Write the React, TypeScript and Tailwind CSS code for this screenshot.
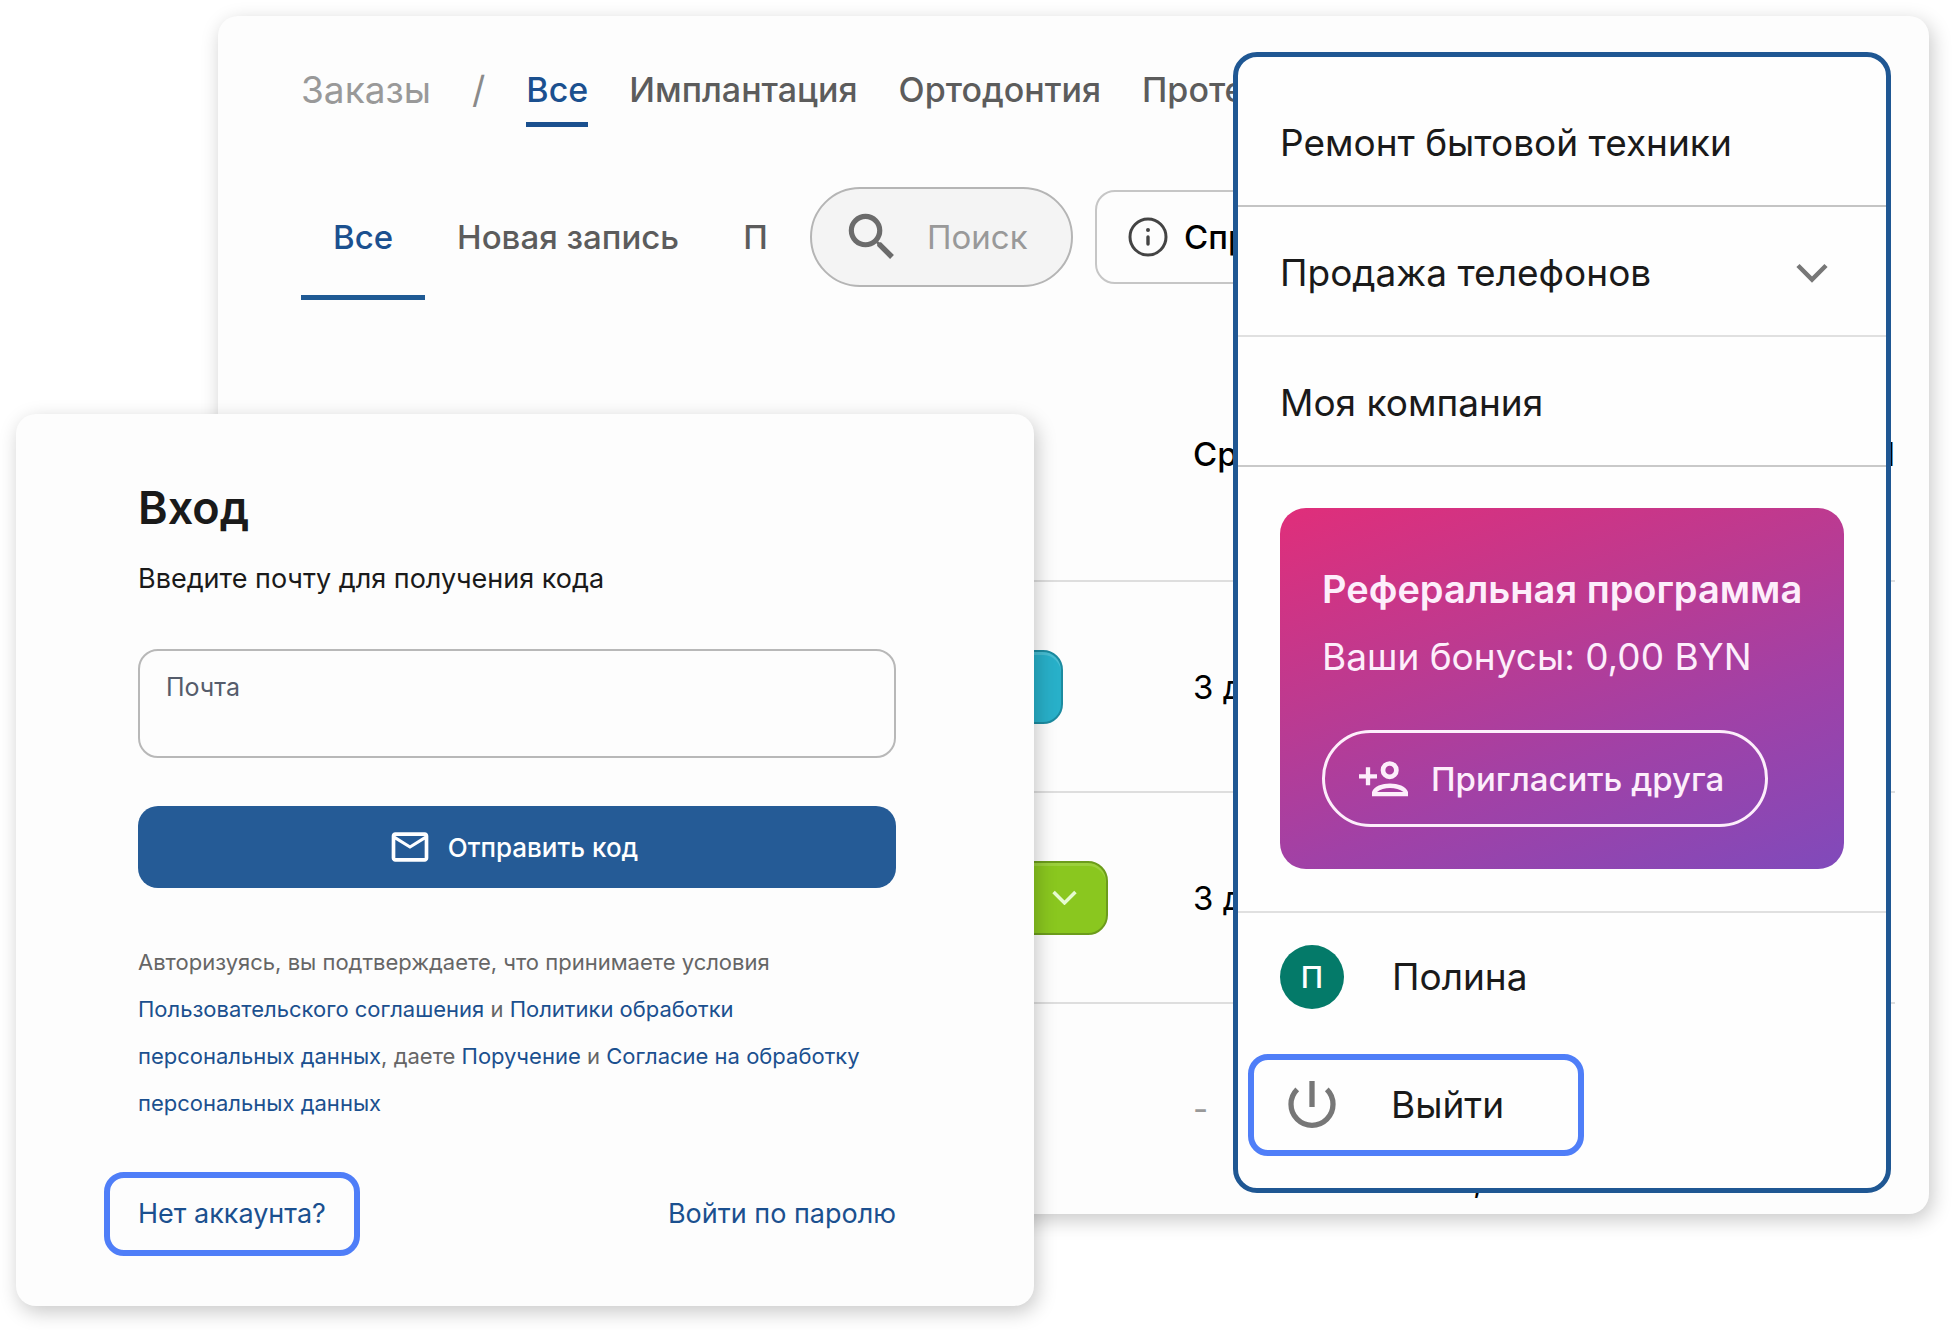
import React, { useState } from 'react';
import { MdMailOutline, MdSearch } from 'react-icons/md';
import { clsx } from 'clsx';

const categories = ['Все', 'Имплантация', 'Ортодонтия', 'Протезирование'];
const filters = ['Все', 'Новая запись', 'П'];

const orders = [
  { id: 1, status: 'teal', term: '3 дня', total: '' },
  { id: 2, status: 'green', term: '3 дня', total: '' },
  { id: 3, status: '', term: '-', total: '0,00' },
];

const Chevron: React.FC<{ className?: string }> = ({ className }) => (
  <svg
    viewBox="0 0 32 20"
    fill="none"
    stroke="currentColor"
    strokeWidth="4.5"
    className={className}
    aria-hidden="true"
  >
    <path d="M2 2.5 16 16.5 30 2.5" />
  </svg>
);

const InfoIcon: React.FC = () => (
  <svg viewBox="0 0 40 40" fill="none" stroke="#444" strokeWidth="3" className="size-10" aria-hidden="true">
    <circle cx="20" cy="20" r="18" />
    <path d="M20 20v7" strokeWidth="3.4" strokeLinecap="round" />
    <circle cx="20" cy="13" r="2" fill="#444" stroke="none" />
  </svg>
);

const InviteIcon: React.FC = () => (
  <svg viewBox="0 0 50 36" fill="none" className="h-9 w-[50px]" aria-hidden="true">
    <path d="M9 6.3v18M0 15.3h18" stroke="currentColor" strokeWidth="4.3" />
    <circle cx="30.7" cy="9.2" r="6.7" stroke="currentColor" strokeWidth="4.7" />
    <path
      fill="currentColor"
      fillRule="evenodd"
      d="M13 35.3V31C15 25.3 23 22.6 31 22.6S47 25.3 49 31V35.3ZM18 31C21 28.3 26 27 31 27S41 28.3 44.5 31Z"
    />
  </svg>
);

const PowerIcon: React.FC = () => (
  <svg viewBox="0 0 48 48" fill="none" stroke="currentColor" strokeWidth="5.3" className="size-12 text-[#777]" aria-hidden="true">
    <path d="M24 0v26M9.2 8.4a21 21 0 1 0 29.6 0" />
  </svg>
);

const StatusPill: React.FC<{ status: string }> = ({ status }) => {
  if (!status) return null;
  const green = status === 'green';
  return (
    <button
      type="button"
      aria-label="Статус заказа"
      className={clsx(
        'flex h-[74px] items-center justify-end rounded-[20px] border-2 px-[29px]',
        green
          ? 'w-[285px] border-[#6c9c1c] bg-[#8ac71f] shadow-[inset_0_3px_0_#9bd03c]'
          : 'w-[240px] border-[#1c8ba0] bg-[#28b0c9] shadow-[inset_0_3px_0_#48bdd2]'
      )}
    >
      {green && <Chevron className="w-[25px] text-[#e6fbd0]" />}
    </button>
  );
};

const OrdersBoard: React.FC = () => {
  const [category, setCategory] = useState('Все');
  const [filter, setFilter] = useState('Все');

  return (
    <section className="overflow-hidden pt-[50px] pr-[34px] pl-[83px] text-[33px] leading-[48px]">
      {/* Breadcrumb with order categories */}
      <nav className="flex items-start gap-[41px] text-[34px] whitespace-nowrap text-[#5c5c5c]">
        <a href="#orders" className="text-[37px] text-[#999]">Заказы</a>
        <span className="text-[37px] text-[#8a8a8a]">/</span>
        {categories.map((item) => (
          <button
            key={item}
            type="button"
            onClick={() => setCategory(item)}
            className={clsx(
              'border-b-[5px] pb-2 font-medium',
              item === category ? 'border-[#1b508f] text-[#1b508f]' : 'border-transparent'
            )}
          >
            {item}
          </button>
        ))}
      </nav>

      {/* Filters, search and help */}
      <div className="mt-[46px] flex items-center whitespace-nowrap">
        <div className="flex w-[498px] shrink-0 overflow-hidden text-[#5c5c5c]">
          {filters.map((item) => (
            <button
              key={item}
              type="button"
              onClick={() => setFilter(item)}
              className={clsx(
                'border-b-[5px] px-[32px] pt-10 pb-[34px] font-medium',
                item === filter ? 'border-[#1f5a94] text-[#1b508f]' : 'border-transparent'
              )}
            >
              {item}
            </button>
          ))}
        </div>
        <label className="ml-[11px] flex h-[100px] w-[263px] shrink-0 items-center gap-6 rounded-full border-2 border-[#b5b5b5] bg-[#f4f4f4] px-[29px]">
          <MdSearch className="size-[62px] shrink-0 text-[#6b6b6b]" />
          <input
            type="text"
            aria-label="Поиск"
            placeholder="Поиск"
            className="w-full min-w-0 outline-none placeholder:text-[#999]"
          />
        </label>
        <button
          type="button"
          className="ml-[22px] flex h-[94px] shrink-0 items-center gap-4 rounded-[20px] border-2 border-[#c6c6c6] px-[31px] font-medium text-black"
        >
          <InfoIcon />
          Справка
        </button>
      </div>

      <table className="mt-7 w-full table-fixed text-left text-black">
        <thead>
          <tr className="h-[253px] border-b-2 border-[#dedede]">
            <th className="w-[522px]" />
            <th className="w-[370px]" />
            <th className="w-[240px] font-medium">Срок</th>
            <th className="text-right font-medium">П</th>
          </tr>
        </thead>
        <tbody>
          {orders.map((order) => (
            <tr key={order.id} className="h-[211px] border-b-2 border-[#dedede] last:border-b-0">
              <td />
              <td><StatusPill status={order.status} /></td>
              <td className={order.term === '-' ? 'text-[#999]' : ''}>{order.term}</td>
              <td className="pb-[10px] pl-5 align-bottom">{order.total}</td>
            </tr>
          ))}
        </tbody>
      </table>
    </section>
  );
};

const AccountMenu: React.FC = () => (
  <aside className="absolute top-9 right-[38px] w-[658px] overflow-hidden rounded-[24px] border-[5px] border-[#1f5793] bg-[#fefefe] pt-5 pb-8 text-[37px] leading-[48px] text-[#1a1a1a]">
    <a href="#repair" className="flex h-[130px] items-center border-b-2 border-[#c4c4c4] px-[42px] pt-1">
      Ремонт бытовой техники
    </a>
    <button
      type="button"
      className="flex h-[130px] w-full items-center justify-between border-b-2 border-[#e0e0e0] pt-1 pr-[58px] pl-[42px]"
    >
      Продажа телефонов
      <Chevron className="w-8 text-[#777]" />
    </button>
    <a href="#company" className="flex h-[130px] items-center border-b-2 border-[#c9c9c9] px-[42px] pt-1">
      Моя компания
    </a>

    <div className="border-b-2 border-[#e0e0e0] px-[42px] pt-[41px] pb-[42px]">
      <div className="rounded-[26px] bg-[linear-gradient(160deg,#e02e7a_0%,#bd3a90_36%,#a141a6_64%,#804abb_100%)] px-[42px] pt-[47px] pb-[42px] whitespace-nowrap text-[#fdeefb]">
        <h2 className="text-[38px] leading-[68px] font-semibold">Реферальная программа</h2>
        <p className="leading-[68px]">Ваши бонусы: 0,00 BYN</p>
        <button
          type="button"
          className="mt-[39px] flex h-[97px] w-[446px] items-center gap-[22px] rounded-full border-[3px] border-[#fdeefb] pl-[34px] text-[33px] font-medium"
        >
          <InviteIcon />
          Пригласить друга
        </button>
      </div>
    </div>

    <a href="#profile" className="flex items-center gap-12 px-[42px] pt-8">
      <span className="grid size-[64px] place-items-center rounded-full bg-[#047a69] text-[30px] font-medium text-white">П</span>
      Полина
    </a>
    <button
      type="button"
      className="mt-[45px] ml-[10px] flex h-[102px] w-[336px] items-center gap-[55px] rounded-[20px] border-[6px] border-[#4f7ef8] pl-[34px]"
    >
      <PowerIcon />
      Выйти
    </button>
  </aside>
);

const LoginCard: React.FC = () => {
  const [email, setEmail] = useState('');

  return (
    <form
      onSubmit={(e) => e.preventDefault()}
      className="absolute top-[414px] left-4 w-[1018px] rounded-[20px] bg-[#fdfdfd] pt-16 pr-[138px] pb-[50px] pl-[122px] text-[27px] text-[#1a1a1a] shadow-[3px_6px_20px_rgba(0,0,0,0.22)]"
    >
      <h1 className="text-[45px] leading-[60px] font-semibold">Вход</h1>
      <p className="mt-[21px] leading-[40px]">Введите почту для получения кода</p>

      <div className="mt-[50px] flex h-[109px] flex-col rounded-[20px] border-2 border-[#b8b8b8] px-[26px] pt-4">
        <label htmlFor="email" className="text-[25px] leading-[40px] text-[#555c6b]">Почта</label>
        <input
          id="email"
          type="email"
          value={email}
          onChange={(e) => setEmail(e.target.value)}
          className="leading-[40px] outline-none"
        />
      </div>

      <button
        type="submit"
        className="mt-12 flex h-[82px] w-full items-center justify-center gap-4 rounded-[20px] bg-[#255b96] pr-2 text-[26px] font-medium text-white"
      >
        <MdMailOutline className="size-[44px]" />
        Отправить код
      </button>

      <p className="mt-[51px] text-[22px] leading-[47px] text-[#666] [&_a]:text-[#1b508f]">
        Авторизуясь, вы подтверждаете, что принимаете условия{' '}
        <a href="#terms">Пользовательского соглашения</a> и{' '}
        <a href="#policy">Политики обработки персональных данных</a>, даете{' '}
        <a href="#order">Поручение</a> и{' '}
        <a href="#consent">Согласие на обработку персональных данных</a>
      </p>

      <div className="mt-[45px] flex items-center justify-between text-[#1b508f]">
        <a
          href="#signup"
          className="-ml-[34px] flex h-[84px] items-center rounded-[20px] border-[6px] border-[#4f7ef8] px-7"
        >
          Нет аккаунта?
        </a>
        <a href="#password">Войти по паролю</a>
      </div>
    </form>
  );
};

const App: React.FC = () => (
  <main className="relative min-h-screen bg-white pt-4 pr-[23px] pb-[116px] pl-[218px] font-['Inter',sans-serif]">
    <div className="relative rounded-[20px] bg-[#fdfdfd] shadow-[3px_6px_20px_rgba(0,0,0,0.22)]">
      <OrdersBoard />
      <AccountMenu />
    </div>
    <LoginCard />
  </main>
);

export default App;
